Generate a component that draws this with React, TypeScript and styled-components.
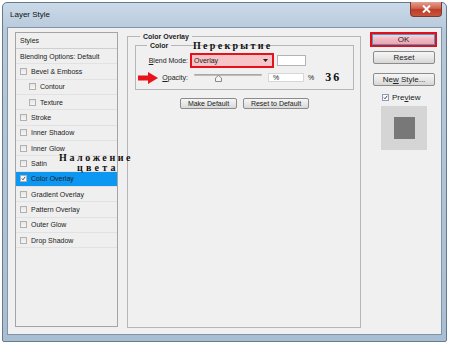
import styled, { createGlobalStyle } from 'styled-components';

const GlobalStyle = createGlobalStyle`
  html, body { margin: 0; padding: 0; background: #fff; }
  body { font-family: "Liberation Sans", Arial, sans-serif; color: #222; }
`;

const STYLE_ITEMS = [
  { label: 'Bevel & Emboss', sub: false },
  { label: 'Contour', sub: true },
  { label: 'Texture', sub: true },
  { label: 'Stroke', sub: false },
  { label: 'Inner Shadow', sub: false },
  { label: 'Inner Glow', sub: false },
  { label: 'Satin', sub: false },
  { label: 'Color Overlay', sub: false, checked: true },
  { label: 'Gradient Overlay', sub: false },
  { label: 'Pattern Overlay', sub: false },
  { label: 'Outer Glow', sub: false },
  { label: 'Drop Shadow', sub: false },
];

const OPACITY = 35;

export default function App() {
  return (
    <Page>
      <GlobalStyle />
      <Window>
        <TitleBar>
          <Title>Layer Style</Title>
          <CloseButton>
            <svg width="9" height="8" viewBox="0 0 9 8">
              <path d="M1 0.5 L8 7.5 M8 0.5 L1 7.5" stroke="#fff" strokeWidth="2" />
            </svg>
          </CloseButton>
        </TitleBar>
        <Content>
          <StylesPanel>
            <PanelHeader>Styles</PanelHeader>
            <StyleRow>Blending Options: Default</StyleRow>
            {STYLE_ITEMS.map((item) => (
              <StyleRow key={item.label} $sub={item.sub} $selected={item.checked}>
                <CheckBox $checked={item.checked}>
                  {item.checked && <CheckMark />}
                </CheckBox>
                {item.label}
              </StyleRow>
            ))}
          </StylesPanel>

          <Group>
            <Legend>Color Overlay</Legend>
            <InnerGroup>
              <Legend>Color</Legend>
              <FieldRow>
                <FieldLabel><u>B</u>lend Mode:</FieldLabel>
                <Dropdown>
                  <span>Overlay</span>
                  <svg width="5" height="3" viewBox="0 0 5 3">
                    <path d="M0 0 H5 L2.5 3 Z" fill="#222" />
                  </svg>
                </Dropdown>
                <Swatch />
              </FieldRow>
              <FieldRow $top={4}>
                <FieldLabel><u>O</u>pacity:</FieldLabel>
                <Slider>
                  <Track />
                  <Thumb style={{ left: `${OPACITY}%` }}>
                    <svg width="7" height="7" viewBox="0 0 7 7">
                      <path d="M0.5 6.5 V3 L3.5 0.5 L6.5 3 V6.5 Z" fill="#f4f4f4" stroke="#8a8a8a" />
                    </svg>
                  </Thumb>
                </Slider>
                <NumberBox>%</NumberBox>
                <Unit>%</Unit>
                <Note>36</Note>
              </FieldRow>
            </InnerGroup>
            <ButtonRow>
              <SmallButton $w={57}>Make Default</SmallButton>
              <SmallButton $w={66}>Reset to Default</SmallButton>
            </ButtonRow>
          </Group>

          <Side>
            <Highlight>
              <OkButton>OK</OkButton>
            </Highlight>
            <SideButton $top={4}>Reset</SideButton>
            <SideButton $top={9}>
              <span>Ne<u>w</u> Style...</span>
            </SideButton>
            <PreviewRow>
              <CheckBox $checked $light>
                <CheckMark />
              </CheckBox>
              <span>Pre<u>v</u>iew</span>
            </PreviewRow>
            <PreviewBox>
              <PreviewSquare />
            </PreviewBox>
          </Side>
        </Content>
      </Window>

      <Arrow>
        <svg width="20" height="12" viewBox="0 0 20 12">
          <path d="M0 3.5 H10 V0 L20 6 L10 12 V8.5 H0 Z" fill="#e8141c" />
        </svg>
      </Arrow>
      <Caption $x={193} $y={40} $spacing={2.3}>Перекрытие</Caption>
      <Caption $x={59} $y={152} $spacing={2.6}>Наложение</Caption>
      <Caption $x={77} $y={162} $spacing={3.2}>цвета</Caption>
    </Page>
  );
}

function CheckMark() {
  return (
    <svg width="7" height="7" viewBox="0 0 7 7">
      <path d="M1.2 3.6 L2.8 5.3 L5.8 1.2" fill="none" stroke="#1b2b6a" strokeWidth="1.2" />
    </svg>
  );
}

const Page = styled.div`
  position: relative;
  width: 450px;
  height: 343px;
  padding: 2px 0 0 2px;
  box-sizing: border-box;
  overflow: hidden;
`;

const Window = styled.div`
  width: 445px;
  height: 340px;
  box-sizing: border-box;
  border: 1px solid #667a8e;
  border-radius: 5px 5px 2px 2px;
  background: linear-gradient(180deg, #cbdae8 0%, #b6c9db 8%, #a8bed2 100%);
  padding: 0 4px 6px;
  display: flex;
  flex-direction: column;
`;

const TitleBar = styled.div`
  height: 24px;
  display: flex;
  justify-content: space-between;
  align-items: flex-start;
`;

const Title = styled.span`
  font-size: 8px;
  line-height: 10px;
  color: #111;
  margin: 7px 0 0 3px;
`;

const CloseButton = styled.div`
  width: 32px;
  height: 15px;
  margin: -1px 0 0 0;
  box-sizing: border-box;
  border: 1px solid #7a3a30;
  border-top: none;
  border-radius: 0 0 4px 4px;
  background: linear-gradient(180deg, #e2a090 0%, #d0624c 45%, #bd3c26 55%, #c8553c 100%);
  display: flex;
  align-items: center;
  justify-content: center;
`;

const Content = styled.div`
  flex: 1;
  background: #f0f0f0;
  border: 1px solid #8294a6;
  box-sizing: border-box;
  display: grid;
  grid-template-columns: 103px 234px 67px;
  column-gap: 9px;
  align-items: start;
  padding: 4px 0 6px 7px;
`;

const StylesPanel = styled.div`
  height: 295px;
  box-sizing: border-box;
  border: 1px solid #a4a4a4;
  background: #efefef;
  font-size: 7px;
`;

const PanelHeader = styled.div`
  height: 16px;
  box-sizing: border-box;
  border-bottom: 1px solid #cfcfcf;
  display: flex;
  align-items: center;
  padding-left: 4px;
`;

const StyleRow = styled.div<{ $sub?: boolean; $selected?: boolean }>`
  height: 15.33px;
  box-sizing: border-box;
  border-bottom: 1px solid #e2e2e2;
  display: flex;
  align-items: center;
  gap: 4px;
  padding-left: ${(p) => (p.$sub ? 13 : 4)}px;
  background: ${(p) => (p.$selected ? '#0b97f2' : 'transparent')};
  white-space: nowrap;
`;

const CheckBox = styled.span<{ $checked?: boolean; $light?: boolean }>`
  width: 7px;
  height: 7px;
  flex: none;
  box-sizing: border-box;
  border: 1px solid ${(p) => (p.$light ? '#8e9bb0' : '#b0b0b0')};
  background: ${(p) =>
    p.$checked ? '#fbfbfb' : 'linear-gradient(180deg, #e6e6e6 0%, #f6f6f6 100%)'};
  display: flex;
  align-items: center;
  justify-content: center;
  overflow: hidden;
`;

const Group = styled.fieldset`
  margin: 0;
  height: 296px;
  box-sizing: border-box;
  border: 1px solid #b6b6b6;
  padding: 0 6px 0 7px;
  font-size: 7px;
  display: flex;
  flex-direction: column;
`;

const Legend = styled.legend`
  font-weight: bold;
  font-size: 7px;
  line-height: 9px;
  margin-left: 5px;
  padding: 0 3px;
  color: #222;
`;

const InnerGroup = styled.fieldset`
  margin: 0;
  border: 1px solid #b6b6b6;
  padding: 0 0 6px 0;
  display: flex;
  flex-direction: column;

  & > legend {
    margin-left: 11px;
  }
`;

const FieldRow = styled.div<{ $top?: number }>`
  display: flex;
  align-items: center;
  margin-top: ${(p) => p.$top ?? 3}px;
  height: ${(p) => (p.$top ? 11 : 15)}px;
`;

const FieldLabel = styled.span`
  width: 52px;
  text-align: right;
  margin-right: 2px;
  white-space: nowrap;
`;

const Dropdown = styled.div`
  width: 84px;
  height: 15px;
  box-sizing: border-box;
  border: 2px solid #e3121b;
  background: #f7c4c7;
  display: flex;
  align-items: center;
  justify-content: space-between;
  padding: 0 4px 0 2px;
`;

const Swatch = styled.div`
  width: 29px;
  height: 11px;
  margin-left: 3px;
  box-sizing: border-box;
  border: 1px solid #b4b4b4;
  background: #fff;
`;

const Slider = styled.div`
  position: relative;
  width: 68px;
  height: 11px;
  margin-left: 4px;
`;

const Track = styled.div`
  position: absolute;
  left: 0;
  right: 0;
  top: 2px;
  height: 2px;
  background: linear-gradient(180deg, #9c9c9c, #c8c8c8);
  border-radius: 1px;
`;

const Thumb = styled.div`
  position: absolute;
  top: 3px;
  width: 7px;
  height: 7px;
  margin-left: -3px;
  line-height: 0;
`;

const NumberBox = styled.div`
  width: 36px;
  height: 9px;
  margin-left: 6px;
  box-sizing: border-box;
  border: 1px solid #d6d6d6;
  background: #fff;
  padding-left: 4px;
  line-height: 7px;
`;

const Unit = styled.span`
  margin-left: 4px;
`;

const Note = styled.span`
  margin-left: 11px;
  font-family: "Liberation Serif", "Times New Roman", serif;
  font-weight: bold;
  font-size: 12px;
  letter-spacing: 2px;
  color: #111;
`;

const ButtonRow = styled.div`
  display: flex;
  justify-content: center;
  gap: 6px;
  margin-top: 8px;
`;

const SmallButton = styled.div<{ $w: number }>`
  width: ${(p) => p.$w}px;
  height: 11px;
  box-sizing: border-box;
  border: 1px solid #8c8c8c;
  border-radius: 2px;
  background: linear-gradient(180deg, #f6f6f6 0%, #e8e8e8 50%, #d8d8d8 100%);
  display: flex;
  align-items: center;
  justify-content: center;
  font-size: 7px;
  white-space: nowrap;
`;

const Side = styled.div`
  display: flex;
  flex-direction: column;
  font-size: 8px;
`;

const Highlight = styled.div`
  height: 15px;
  box-sizing: border-box;
  border: 2px solid #e0101e;
  display: flex;
`;

const OkButton = styled.div`
  flex: 1;
  border: 1px solid #4a9ac8;
  background: linear-gradient(180deg, #f8d6dc 0%, #f0b8c2 50%, #eaa6b2 100%);
  display: flex;
  align-items: center;
  justify-content: center;
  line-height: 1;
`;

const SideButton = styled.div<{ $top: number }>`
  margin: ${(p) => p.$top}px 2px 0 3px;
  height: 13px;
  box-sizing: border-box;
  border: 1px solid #8c8c8c;
  border-radius: 2px;
  background: linear-gradient(180deg, #f6f6f6 0%, #e8e8e8 50%, #d6d6d6 100%);
  display: flex;
  align-items: center;
  justify-content: center;
  white-space: nowrap;
`;

const PreviewRow = styled.div`
  display: flex;
  align-items: center;
  gap: 3px;
  margin: 7px 0 0 12px;
  height: 8px;
`;

const PreviewBox = styled.div`
  width: 46px;
  height: 44px;
  margin: 5px 0 0 11px;
  background: #d5d5d5;
  display: flex;
  align-items: center;
  justify-content: center;
`;

const PreviewSquare = styled.div`
  width: 21px;
  height: 22px;
  background: #787878;
`;

const Arrow = styled.div`
  position: absolute;
  left: 138px;
  top: 72px;
  line-height: 0;
`;

const Caption = styled.div<{ $x: number; $y: number; $spacing: number }>`
  position: absolute;
  left: ${(p) => p.$x}px;
  top: ${(p) => p.$y}px;
  font-family: "Liberation Serif", "Times New Roman", serif;
  font-weight: bold;
  font-size: 10px;
  line-height: 12px;
  letter-spacing: ${(p) => p.$spacing}px;
  color: #111;
  white-space: nowrap;
`;
